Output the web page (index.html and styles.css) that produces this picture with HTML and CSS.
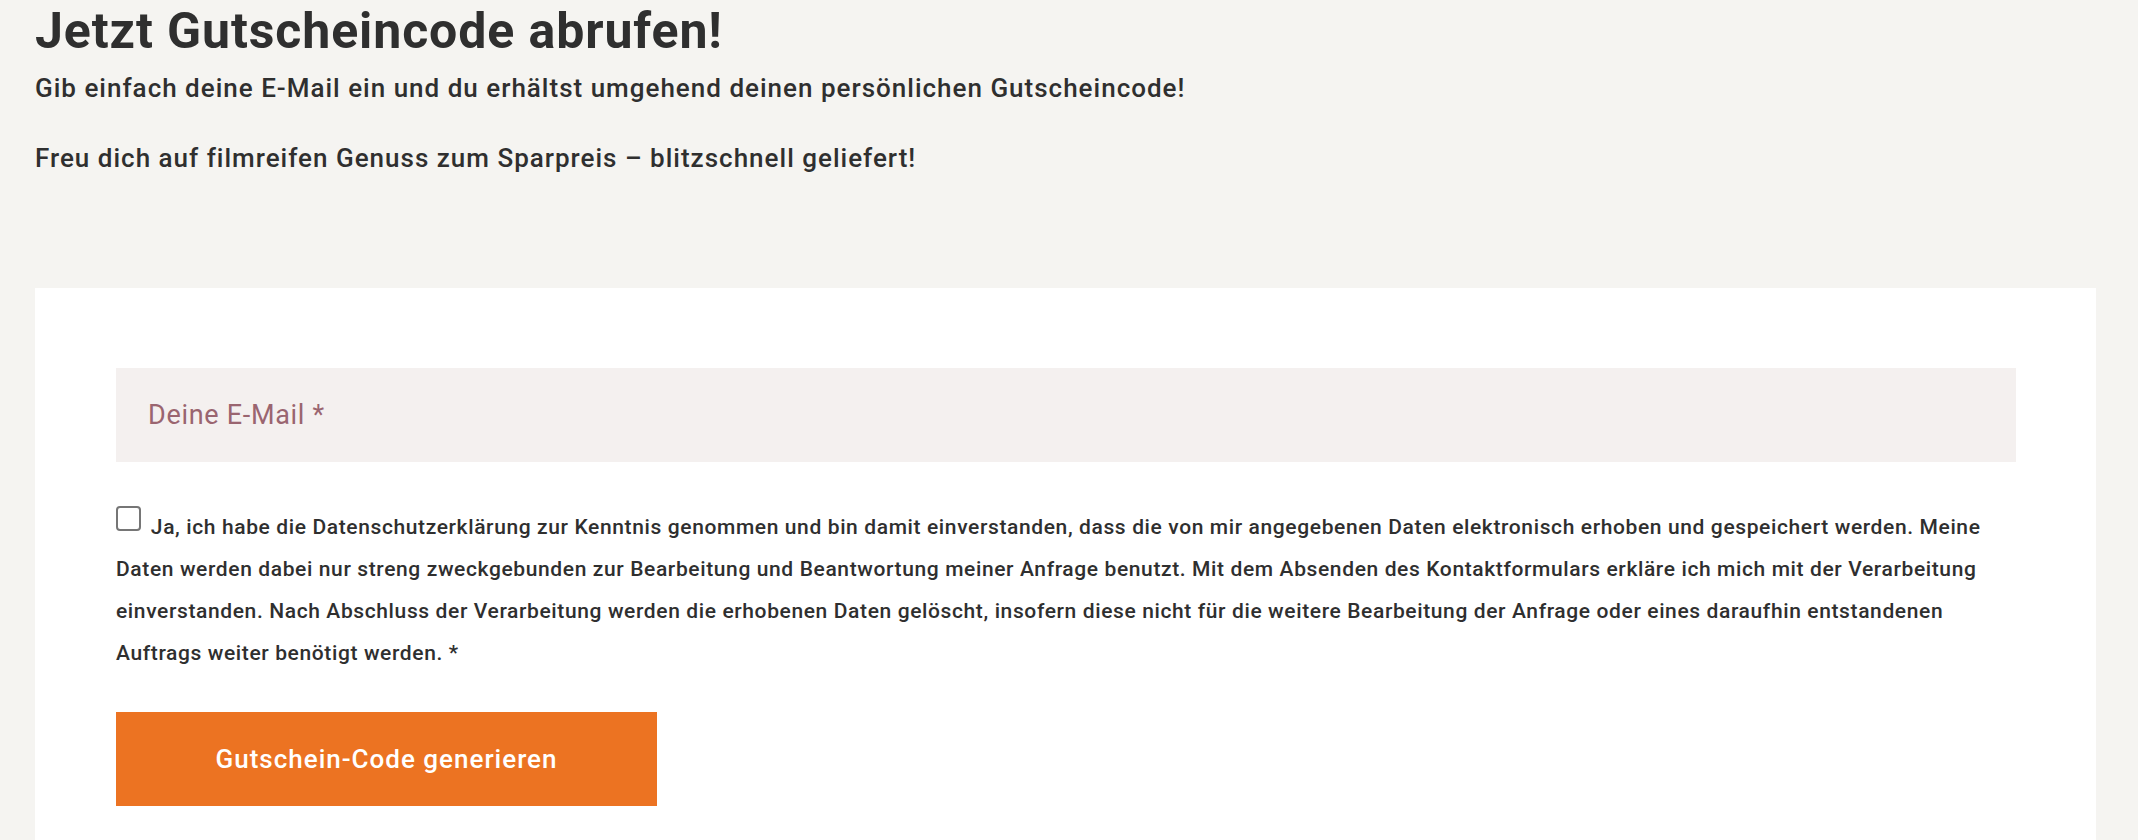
FILE: index.html
```html
<!DOCTYPE html>
<html lang="de">
<head>
  <meta charset="UTF-8">
  <meta name="viewport" content="width=device-width, initial-scale=1.0">
  <title>Jetzt Gutscheincode abrufen!</title>
  <link rel="stylesheet" href="styles.css">
</head>
<body>
  <div class="page">
    <!-- Intro -->
    <div class="intro">
      <h1>Jetzt Gutscheincode abrufen!</h1>
      <p>Gib einfach deine E-Mail ein und du erhältst umgehend deinen persönlichen Gutscheincode!</p>
      <p>Freu dich auf filmreifen Genuss zum Sparpreis – blitzschnell geliefert!</p>
    </div>

    <!-- Coupon form -->
    <div class="card">
      <form class="coupon-form" onsubmit="return false;">
        <input type="email" class="email-input" placeholder="Deine E-Mail *" required>
        <p class="consent">
          <input type="checkbox" id="consent" required>
          <label for="consent">Ja, ich habe die Datenschutzerklärung zur Kenntnis genommen und bin damit einverstanden, dass die von mir angegebenen Daten elektronisch erhoben und gespeichert werden. Meine Daten werden dabei nur streng zweckgebunden zur Bearbeitung und Beantwortung meiner Anfrage benutzt. Mit dem Absenden des Kontaktformulars erkläre ich mich mit der Verarbeitung einverstanden. Nach Abschluss der Verarbeitung werden die erhobenen Daten gelöscht, insofern diese nicht für die weitere Bearbeitung der Anfrage oder eines daraufhin entstandenen Auftrags weiter benötigt werden. *</label>
        </p>
        <button type="submit" class="submit-btn">Gutschein-Code generieren</button>
      </form>
    </div>
  </div>
</body>
</html>
```

FILE: styles.css
```css
body {
  font-family: Roboto, "Noto Sans", Arial, sans-serif;
  margin: 0;
  background-color: #f5f4f1;
  color: #2f2f2f;
}
.page {
  padding: 0 42px 0 35px;
}
.intro h1 {
  margin: 1px 0 0;
  font-size: 50px;
  line-height: 60px;
  font-weight: 700;
  letter-spacing: 0.9px;
  color: #2f2f2f;
}
.intro p {
  margin: 8px 0 0;
  font-size: 26px;
  line-height: 39px;
  font-weight: 500;
  letter-spacing: 1px;
}
.intro p + p {
  margin-top: 31px;
}
.card {
  margin-top: 110px;
  background: #fff;
  padding: 80px 80px 60px 81px;
}
.email-input {
  display: block;
  width: 100%;
  height: 94px;
  box-sizing: border-box;
  padding: 0 32px;
  border: none;
  background: #f4f0ef;
  font-family: inherit;
  font-size: 27px;
  letter-spacing: 0.7px;
  color: #333;
  outline: none;
}
.email-input::placeholder {
  color: #9a6570;
}
.consent {
  margin: 41px 0 0;
  font-size: 21px;
  line-height: 42px;
  font-weight: 500;
  letter-spacing: 0.62px;
  color: #2f2f2f;
}
.consent input {
  appearance: none;
  -webkit-appearance: none;
  width: 25px;
  height: 25px;
  margin: 3px 4px 3px 0;
  box-sizing: border-box;
  border: 2px solid #767676;
  border-radius: 4px;
  background: #fff;
  vertical-align: baseline;
}
.submit-btn {
  margin-top: 38px;
  width: 541px;
  height: 94px;
  border: none;
  background: #ec7322;
  color: #fff;
  font-family: inherit;
  font-size: 26px;
  font-weight: 500;
  letter-spacing: 1px;
  cursor: pointer;
}
.submit-btn:hover {
  background: #d9641a;
}
```
